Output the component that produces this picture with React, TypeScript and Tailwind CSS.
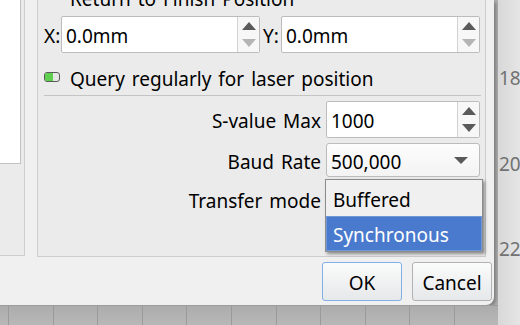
import type { ReactNode } from "react";

const font = { fontFamily: '"Noto Sans", "Open Sans", sans-serif' };

function Arrow({ dir, dark }: { dir: "up" | "down"; dark: boolean }) {
	return (
		<svg width="14" height="8" viewBox="0 0 14 8" className="block">
			<polygon
				points={dir === "up" ? "0,8 7,0 14,8" : "0,0 14,0 7,8"}
				fill={dark ? "#5a5a5a" : "#b4b4b4"}
			/>
		</svg>
	);
}

function SpinBox({
	value,
	className,
	downDark = true,
}: {
	value: string;
	className?: string;
	downDark?: boolean;
}) {
	return (
		<div
			className={`flex h-[37px] rounded-[2px] border border-[#bcbcbc] bg-white ${className ?? ""}`}
		>
			<div className="flex flex-1 items-center pt-[4px] pl-[4px] text-[19px] leading-none text-black">
				{value}
			</div>
			<div className="flex w-[22px] flex-col items-center justify-between border-l border-[#d2d2d2] bg-[#f7f7f7] py-[5px]">
				<Arrow dir="up" dark />
				<Arrow dir="down" dark={downDark} />
			</div>
		</div>
	);
}

function FormRow({
	label,
	children,
	className,
}: {
	label: string;
	children: ReactNode;
	className?: string;
}) {
	return (
		<div className={`flex items-center ${className ?? ""}`}>
			<div className="w-[278px] pt-[4px] pr-[1px] text-right text-[19px] leading-none text-black">
				{label}
			</div>
			<div className="ml-[4px] w-[154px]">{children}</div>
		</div>
	);
}

function Button({ label, primary }: { label: string; primary?: boolean }) {
	return (
		<div
			className={`flex h-[39px] w-[80px] items-center justify-center rounded-[3px] border bg-gradient-to-b from-[#fbfbfb] to-[#e6e8ea] pt-[3px] text-[19px] leading-none text-black ${
				primary ? "border-[#7fb0e6]" : "border-[#b2b2b2]"
			}`}
		>
			{label}
		</div>
	);
}

export default function App() {
	const gridLines = Array.from({ length: 11 }, (_, i) => i);

	return (
		<div
			className="relative flex h-[325px] w-[520px] overflow-hidden bg-[#b4b4b4] [word-spacing:2px]"
			style={font}
		>
			<div className="flex w-[498px] flex-col">
				<div className="flex h-[305px] w-[494px] flex-col rounded-br-[8px] bg-[#f0f0f0] shadow-[2px_2px_4px_rgba(0,0,0,0.35)]">
					<div className="flex">
						<div className="h-[256px] w-[25px] border-r border-b border-[#cdcdcd] bg-[#ebebeb]">
							<div className="h-[164px] w-[21px] border-r border-b border-[#c2c2c2] bg-white" />
						</div>
						<div className="ml-[12px] flex h-[257px] w-[449px] flex-col border-x border-b border-[#cdcdcd] bg-[#ebebeb] pr-[4px] pl-[6px]">
							<div className="h-[16px] overflow-hidden">
								<div className="-mt-[11px] pl-[26px] text-[19px] leading-[20px] text-black">
									Return to Finish Position
								</div>
							</div>
							<div className="flex items-center">
								<div className="w-[17px] pt-[4px] text-[19px] leading-none text-black">
									X:
								</div>
								<SpinBox value="0.0mm" className="w-[199px]" downDark={false} />
								<div className="ml-[3px] w-[18px] pt-[4px] text-[19px] leading-none text-black">
									Y:
								</div>
								<SpinBox value="0.0mm" className="w-[199px]" downDark={false} />
							</div>
							<div className="mt-[6px] flex h-[36px] items-center">
								<div className="flex h-[10px] w-[16px] overflow-hidden rounded-[3px] border border-[#5a5a5a] bg-[#e6e6e6]">
									<div className="h-full w-[8px] bg-[#5fcf4f]" />
								</div>
								<div className="ml-[10px] pt-[4px] text-[19px] leading-none text-black">
									Query regularly for laser position
								</div>
							</div>
							<div className="h-px bg-[#c4c4c4]" />
							<FormRow label="S-value Max" className="mt-[5px]">
								<SpinBox value="1000" />
							</FormRow>
							<FormRow label="Baud Rate" className="mt-[5px]">
								<div className="flex h-[34px] items-center justify-between rounded-[3px] border border-[#bcbcbc] bg-gradient-to-b from-[#fdfdfd] to-[#f3f3f3] pr-[11px] pl-[4px] text-[19px] leading-none text-black">
									<span className="pt-[4px]">500,000</span>
									<svg width="14" height="7" viewBox="0 0 14 7">
										<polygon points="0,0 14,0 7,7" fill="#5a5a5a" />
									</svg>
								</div>
							</FormRow>
							<FormRow label="Transfer mode" className="mt-[3px] h-[38px]">
								<div />
							</FormRow>
						</div>
					</div>
					<div className="mt-[5px] flex justify-end gap-[10px] pr-[2px]">
						<Button label="OK" primary />
						<Button label="Cancel" />
					</div>
				</div>
				<div className="flex flex-1 border-t border-[#9c9c9c] bg-gradient-to-b from-[#acacac] to-[#b8b8b8] pl-[8px]">
					{gridLines.map((i) => (
						<div
							key={i}
							className="h-full w-[44.6px] shrink-0 border-l border-[#9a9a9a]"
						/>
					))}
				</div>
			</div>
			<div className="w-px bg-[#111111]" />
			<div className="flex flex-1 flex-col bg-gradient-to-r from-[#d8d8d8] to-[#e6e6e6] pt-[68px] pl-[1px] text-[19px] leading-[20px] text-[#727272]">
				<div className="h-[85.5px]">18</div>
				<div className="h-[85.5px]">20</div>
				<div className="h-[85.5px]">22</div>
			</div>

			<div className="absolute top-[179px] left-[325px] flex w-[158px] flex-col border border-[#8c8c8c] bg-[#f0f0f0] text-[19px] leading-none shadow-[2px_2px_3px_rgba(0,0,0,0.4)]">
				<div className="flex h-[36px] items-center pt-[4px] pl-[7px] text-black">
					Buffered
				</div>
				<div className="flex h-[35px] items-center border border-[#6f98d8] bg-[#4a7acd] pt-[3px] pl-[6px] text-white">
					Synchronous
				</div>
			</div>
		</div>
	);
}
